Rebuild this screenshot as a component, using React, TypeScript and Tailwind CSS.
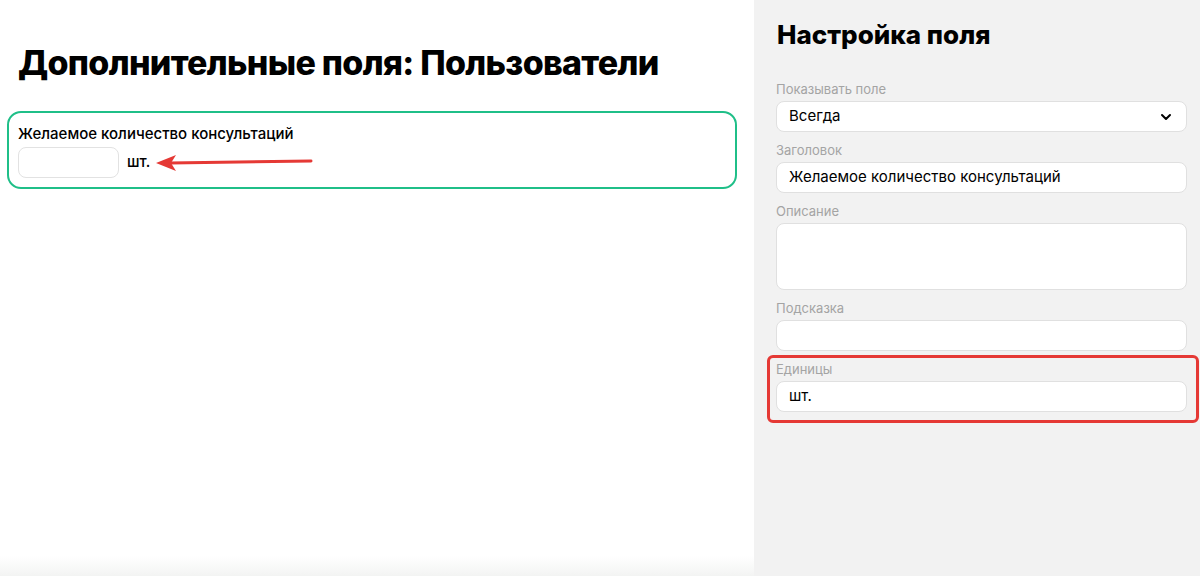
import { ChevronDown } from "lucide-react";

const font = { fontFamily: "Inter, 'Noto Sans', sans-serif" };

function Field({
  label,
  children,
}: {
  label: string;
  children: React.ReactNode;
}) {
  return (
    <div className="flex flex-col">
      <span className="h-[20px] text-[13px] leading-[20px] text-[#a4a4a4]">{label}</span>
      <div className="mt-[2px]">{children}</div>
    </div>
  );
}

function Box({ text, h = "h-[31px]" }: { text?: string; h?: string }) {
  return (
    <div
      className={`flex ${h} items-center rounded-[8px] border border-[#e0e0e0] bg-white px-[12px] text-[15px] text-black`}
    >
      {text}
    </div>
  );
}

export default function App() {
  return (
    <div className="flex h-[576px] w-[1200px] overflow-hidden" style={font}>
      {/* Left: preview */}
      <div className="flex w-[754px] flex-col bg-white">
        <div className="px-[7px]">
          <h1 className="mt-[40px] pl-[11px] text-[34px] font-extrabold leading-[46px] tracking-[-0.7px] text-black">
            Дополнительные поля: Пользователи
          </h1>
          <div className="mt-[25px] w-[730px] rounded-[14px] border-2 border-[#1fbf88] px-[9px] pt-[11px] pb-[9px]">
            <div className="text-[15px] font-medium leading-[20px] text-black">
              Желаемое количество консультаций
            </div>
            <div className="mt-[3px] flex items-center">
              <div className="h-[31px] w-[101px] rounded-[8px] border border-[#e2e2e2] bg-white" />
              <span className="ml-[8px] text-[15px] font-medium text-black">шт.</span>
              <svg width="160" height="20" viewBox="0 0 160 20" className="ml-[6px]">
                <line x1="14" y1="10" x2="155" y2="8" stroke="#e53935" strokeWidth="3" strokeLinecap="round" />
                <path d="M0 10 L20 2 L15 10 L20 18 Z" fill="#e53935" />
              </svg>
            </div>
          </div>
        </div>
        <div className="flex-1" />
        <div className="h-[20px] bg-gradient-to-b from-white to-[#f3f4f3]" />
      </div>

      {/* Right: settings */}
      <div className="flex flex-1 flex-col bg-[#f2f2f2] pl-[22px] pr-[13px]">
        <h2 className="mt-[19px] pl-[1px] text-[26px] font-extrabold leading-[32px] text-black">
          Настройка поля
        </h2>
        <div className="mt-[28px] flex flex-col gap-[8px]">
          <Field label="Показывать поле">
            <div className="flex h-[31px] items-center justify-between rounded-[8px] border border-[#e0e0e0] bg-white pl-[12px] pr-[12px] text-[15px] text-black">
              <span>Всегда</span>
              <ChevronDown size={16} strokeWidth={3} />
            </div>
          </Field>
          <Field label="Заголовок">
            <Box text="Желаемое количество консультаций" />
          </Field>
          <Field label="Описание">
            <Box h="h-[67px]" />
          </Field>
          <Field label="Подсказка">
            <Box />
          </Field>
          <div className="ml-[-9px] mr-[-12px] mt-[-4px] rounded-[6px] border-[3px] border-[#e53935] pl-[6px] pr-[9px] pt-[1px] pb-[8px]">
            <Field label="Единицы">
              <Box text="шт." />
            </Field>
          </div>
        </div>
      </div>
    </div>
  );
}
